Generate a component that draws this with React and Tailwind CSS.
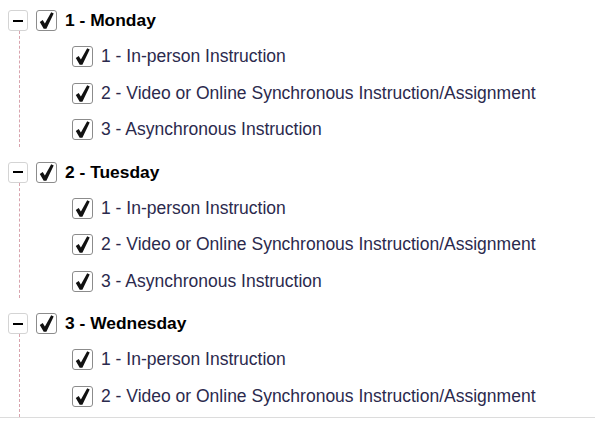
import React from "react";

const groups = [
  { label: "1 - Monday", items: 3 },
  { label: "2 - Tuesday", items: 3 },
  { label: "3 - Wednesday", items: 2 },
];
const children = [
  "1 - In-person Instruction",
  "2 - Video or Online Synchronous Instruction/Assignment",
  "3 - Asynchronous Instruction",
];

function Check() {
  return (
    <div className="w-[21px] h-[21px] shrink-0 rounded-[3px] border border-[#8c8c8c] bg-white flex items-center justify-center">
      <svg width="19" height="19" viewBox="0 0 19 19">
        <path
          d="M2.8 10.9 L5.7 8.9 L7.9 12.6 L14.2 1.3 L16.7 2.6 L9.4 17.7 L6.7 17.7 Z"
          fill="#111"
        />
      </svg>
    </div>
  );
}

function Toggle() {
  return (
    <div className="w-[20px] h-[21px] shrink-0 rounded-[3px] border border-[#d4d4d4] bg-white flex items-center justify-center">
      <div className="w-[10px] h-[2px] bg-black" />
    </div>
  );
}

export default function App() {
  return (
    <div
      className="w-[595px] h-[418px] overflow-hidden border-b border-[#dcdcdc] bg-white pt-[10px] pl-[8px] flex flex-col gap-[15px]"
      style={{ fontFamily: '"Liberation Sans", Arial, sans-serif' }}
    >
      {groups.map((g, gi) => (
        <div key={g.label} className={gi === groups.length - 1 ? "flex flex-col flex-1" : "flex flex-col"}>
          <div className="flex items-center h-[21px]">
            <Toggle />
            <div className="ml-[8px]">
              <Check />
            </div>
            <span className="ml-[8px] pt-[1px] text-[17.4px] font-bold text-black leading-none">
              {g.label}
            </span>
          </div>
          <div className={"ml-[11px] border-l border-dashed border-[#d8a3ad] pl-[52px] pt-[15px] pb-[6.5px] flex flex-col gap-[15.5px]" + (gi === groups.length - 1 ? " flex-1" : "")}>
            {children.slice(0, g.items).map((c) => (
              <div key={c} className="flex items-center h-[21px]">
                <Check />
                <span className="ml-[8px] pt-[1px] text-[17.5px] text-[#2b2a4d] leading-none whitespace-nowrap">
                  {c}
                </span>
              </div>
            ))}
          </div>
        </div>
      ))}
    </div>
  );
}
